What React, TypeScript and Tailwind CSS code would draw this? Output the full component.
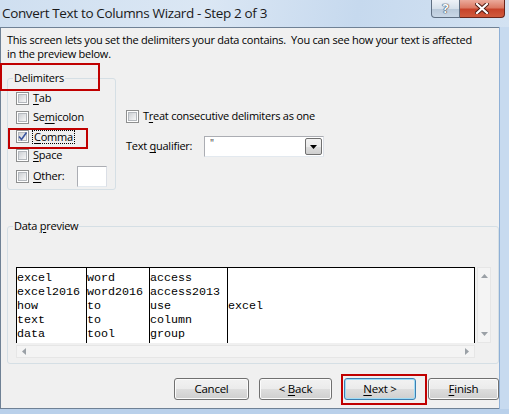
import React from "react";

function Box({ checked }: { checked?: boolean }) {
  return (
    <span className="relative flex h-[13px] w-[13px] shrink-0 items-center justify-center border border-[#8e8f8f] bg-white">
      <span className="h-[9px] w-[9px] border border-[#b4b8bd] bg-gradient-to-br from-[#cdd0d4] to-[#f7f7f7]" />
      {checked && (
        <svg className="absolute left-0 top-0" width="11" height="11" viewBox="0 0 11 11">
          <path d="M2 5.5 L4.5 8.5 L9.5 1.5" fill="none" stroke="#3b56a0" strokeWidth="1.6" />
        </svg>
      )}
    </span>
  );
}

function U({ c }: { c: string }) {
  return <span className="underline underline-offset-[2px] decoration-[1px]">{c}</span>;
}

function Btn({ children, w, def }: { children: React.ReactNode; w: string; def?: boolean }) {
  return (
    <div
      className={`${w} flex h-[22px] items-center justify-center rounded-[3px] border ${
        def ? "border-[#3c7fb1] shadow-[inset_0_0_0_1px_#9fdcf6]" : "border-[#707070] shadow-[inset_0_0_0_1px_#fbfbfb]"
      } bg-[linear-gradient(#f2f2f2_0%,#ebebeb_50%,#dddddd_51%,#cfcfcf_100%)]`}
    >
      <span className="whitespace-pre">{children}</span>
    </div>
  );
}

function Tri({ dir }: { dir: "up" | "down" | "left" | "right" }) {
  const d =
    dir === "up"
      ? "M0 4 L3.5 0 L7 4 Z"
      : dir === "down"
      ? "M0 0 L7 0 L3.5 4 Z"
      : dir === "left"
      ? "M4 0 L4 7 L0 3.5 Z"
      : "M0 0 L0 7 L4 3.5 Z";
  const v = dir === "up" || dir === "down";
  return (
    <svg width={v ? 7 : 4} height={v ? 4 : 7} viewBox={v ? "0 0 7 4" : "0 0 4 7"}>
      <path d={d} fill="#9aa0a6" />
    </svg>
  );
}

const rows = [
  ["excel", "word", "access", ""],
  ["excel2016", "word2016", "access2013", ""],
  ["how", "to", "use", "excel"],
  ["text", "to", "column", ""],
  ["data", "tool", "group", ""],
];

export default function App() {
  const colW = ["w-[70px]", "w-[63px]", "w-[78px]", "w-[247px]"];
  return (
    <div className="relative h-[414px] w-[509px] overflow-hidden bg-[#b9d0ea] font-['Open_Sans',sans-serif] text-[#000]">
      {/* title bar */}
      <div className="relative flex h-[27px] items-start bg-[linear-gradient(100deg,#cfdff0_0%,#dbe7f4_40%,#c6d9ee_70%,#d3e2f2_100%)]">
        <div className="min-w-0 flex-1 whitespace-nowrap pl-[2px] pt-[3px] text-[13.5px] leading-[20px] tracking-[-0.35px] text-[#1a1a1a]">
          Convert Text to Columns Wizard - Step 2 of 3
        </div>
        <div className="mr-[4px] flex h-[18px] shrink-0">
          <div className="flex w-[29px] items-center justify-center rounded-bl-[4px] border border-t-0 border-[#5f6f82] bg-[linear-gradient(#eef2f7_0%,#d6e0ea_50%,#b8c8d9_51%,#c9d7e6_100%)]">
            <span className="text-[13px] font-bold leading-none text-white [text-shadow:0_0_1px_#2b3a4a,0_0_1px_#2b3a4a,0_0_1px_#2b3a4a]">
              ?
            </span>
          </div>
          <div className="flex w-[45px] items-center justify-center rounded-br-[4px] border border-l-0 border-t-0 border-[#6b2419] bg-[linear-gradient(#ebaa9b_0%,#dc7a64_45%,#c7432a_55%,#d05a3c_100%)]">
            <svg width="14" height="11" viewBox="0 0 14 11">
              <path d="M2 1 L12 10 M12 1 L2 10" stroke="#4a1810" strokeWidth="4" strokeLinecap="square" />
              <path d="M2 1 L12 10 M12 1 L2 10" stroke="#ffffff" strokeWidth="2.2" strokeLinecap="square" />
            </svg>
          </div>
        </div>
      </div>

      {/* client */}
      <div className="flex">
        <div className="flex h-[382px] w-[499px] flex-col border-b border-l border-t border-[#6f8195] bg-[#f0f0f0] pl-[6px] pt-[5px] text-[11px] tracking-[-0.25px]">
          <div className="whitespace-pre leading-[14px]">
            {"This screen lets you set the delimiters your data contains.  You can see how your text is affected\nin the preview below."}
          </div>

          <div className="mt-[17px] flex">
            {/* Delimiters */}
            <div className="relative h-[112px] w-[109px] rounded-[3px] border border-[#d5dfe5] pl-[8px] pt-[10px]">
              <span className="absolute left-[5px] top-[-8px] bg-[#f0f0f0] px-[1px] leading-[14px]">Delimiters</span>
              <div className="flex h-[19px] items-center gap-[4px]">
                <Box />
                <span>
                  <U c="T" />ab
                </span>
              </div>
              <div className="flex h-[19px] items-center gap-[4px]">
                <Box />
                <span>
                  Se<U c="m" />icolon
                </span>
              </div>
              <div className="flex h-[19px] items-center gap-[3px]">
                <Box checked />
                <span className="border border-dotted border-[#000] px-[1px] leading-[12px]">
                  <U c="C" />omma
                </span>
              </div>
              <div className="flex h-[19px] items-center gap-[4px]">
                <Box />
                <span>
                  <U c="S" />pace
                </span>
              </div>
              <div className="flex h-[23px] items-center gap-[4px]">
                <Box />
                <span>
                  <U c="O" />ther:
                </span>
                <span className="ml-[9px] h-[21px] w-[30px] border border-[#abadb3] border-b-[#e3e9ef] border-r-[#dbdfe6] bg-white" />
              </div>
            </div>

            {/* right column */}
            <div className="ml-[10px] flex flex-col pt-[29px]">
              <div className="flex h-[19px] items-center gap-[4px]">
                <Box />
                <span>
                  T<U c="r" />eat consecutive delimiters as one
                </span>
              </div>
              <div className="mt-[10px] flex h-[21px] items-center">
                <span className="w-[78px]">
                  Text <U c="q" />ualifier:
                </span>
                <div className="flex h-[21px] w-[120px] border border-[#abadb3] border-b-[#e3e9ef] border-r-[#dbdfe6] bg-white">
                  <span className="flex-1 pl-[5px] pt-[1px] text-[10px] leading-[10px] text-[#333]">"</span>
                  <div className="m-[1px] flex w-[17px] items-center justify-center rounded-[2px] border border-[#707070] bg-[linear-gradient(#f2f2f2_0%,#ebebeb_50%,#dddddd_51%,#cfcfcf_100%)]">
                    <svg width="7" height="4" viewBox="0 0 7 4">
                      <path d="M0 0 L7 0 L3.5 4 Z" fill="#000" />
                    </svg>
                  </div>
                </div>
              </div>
            </div>
          </div>

          {/* Data preview */}
          <div className="relative mt-[36px] h-[138px] w-[492px] rounded-[3px] border border-[#d5dfe5] pl-[8px] pt-[40px]">
            <span className="absolute left-[5px] top-[-8px] bg-[#f0f0f0] px-[1px] leading-[14px]">
              Data <U c="p" />review
            </span>
            <div className="flex">
              <div className="flex flex-col">
                <div className="flex h-[76px] w-[459px] border-l border-t border-black bg-white font-['Liberation_Mono',monospace] text-[11.67px] leading-[14px] tracking-normal">
                  {colW.map((w, ci) => (
                    <div key={ci} className={`${w} shrink-0 border-r border-black pt-[3px]`}>
                      {rows.map((r, ri) => (
                        <div key={ri} className="h-[14px] whitespace-pre">
                          {r[ci]}
                        </div>
                      ))}
                    </div>
                  ))}
                </div>
                <div className="mt-[2px] flex h-[13px] w-[459px] items-center justify-between border border-[#e6e6e6] bg-[#f4f4f4] px-[5px]">
                  <Tri dir="left" />
                  <Tri dir="right" />
                </div>
              </div>
              <div className="ml-[2px] flex h-[76px] w-[14px] flex-col items-center justify-between border border-[#e6e6e6] bg-[#f4f4f4] py-[6px]">
                <Tri dir="up" />
                <Tri dir="down" />
              </div>
            </div>
          </div>

          {/* buttons */}
          <div className="mt-[14px] flex pl-[167px] text-[11.5px]">
            <Btn w="w-[75px]">Cancel</Btn>
            <div className="ml-[10px]">
              <Btn w="w-[73px]">
                {"< "}
                <U c="B" />
                ack
              </Btn>
            </div>
            <div className="ml-[12px]">
              <Btn w="w-[72px]" def>
                <U c="N" />
                {"ext >"}
              </Btn>
            </div>
            <div className="ml-[12px]">
              <Btn w="w-[71px]">
                <U c="F" />
                inish
              </Btn>
            </div>
          </div>
        </div>
        <div className="flex-1 border-l border-[#8fb0d6] bg-[#c7daef]" />
      </div>

      {/* annotation highlights */}
      <div className="absolute left-[0px] top-[63px] h-[28px] w-[100px] border-2 border-[#c00000]" />
      <div className="absolute left-[8px] top-[128px] h-[21px] w-[80px] border-2 border-[#c00000]" />
      <div className="absolute left-[341px] top-[374px] h-[31px] w-[86px] border-2 border-[#c00000]" />
    </div>
  );
}
